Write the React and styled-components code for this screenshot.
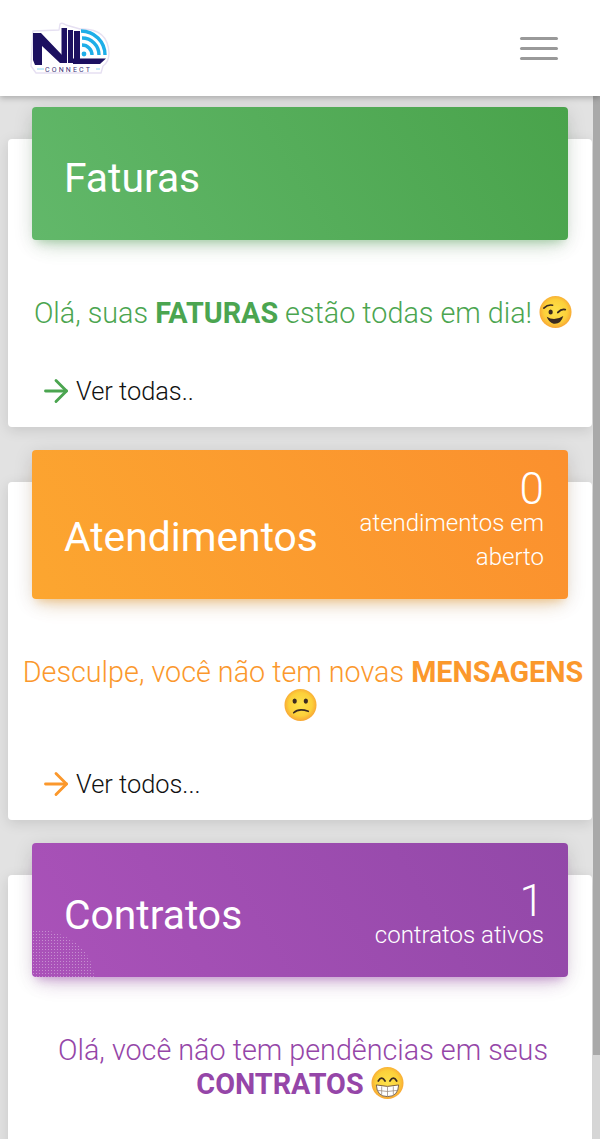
import React from "react";
import styled, { createGlobalStyle } from "styled-components";
import { ArrowRight } from "lucide-react";

const GlobalStyle = createGlobalStyle`
  html, body {
    margin: 0;
    height: 1139px;
    overflow: hidden;
    background: #e2e2e2;
    font-family: Roboto, "Liberation Sans", sans-serif;
  }
`;

const Page = styled.div`
  width: 600px;
  height: 1139px;
  overflow: hidden;
  position: relative;
`;

const TopBar = styled.header`
  position: relative;
  z-index: 3;
  height: 96px;
  background: #fff;
  display: flex;
  align-items: center;
  justify-content: space-between;
  padding: 0 42px 0 28px;
  box-shadow: 0 2px 6px rgba(0, 0, 0, 0.25);
`;

const Burger = styled.div`
  display: flex;
  flex-direction: column;
  gap: 7px;
`;

const BurgerLine = styled.span`
  display: block;
  width: 38px;
  height: 3px;
  border-radius: 2px;
  background: #999;
`;

const Scrollbar = styled.div`
  position: absolute;
  top: 96px;
  right: 0;
  bottom: 0;
  width: 7px;
  background: #d6d6d6;
  z-index: 2;
  &:before {
    content: "";
    display: block;
    height: 959px;
    background: #a9a9a9;
  }
`;

const Content = styled.main`
  padding: 43px 8px 0;
  display: flex;
  flex-direction: column;
  gap: 55px;
`;

const Card = styled.section`
  background: #fff;
  border-radius: 4px;
  box-shadow: 0 3px 14px rgba(0, 0, 0, 0.12);
  padding: 0 0 ${props => props.$bottom || 18}px;
`;

const CardHeader = styled.div`
  position: relative;
  margin: -32px 24px 0;
  height: ${props => props.$height}px;
  box-sizing: border-box;
  border-radius: 4px;
  padding: 0 24px 25px 33px;
  display: flex;
  align-items: flex-end;
  justify-content: space-between;
  color: #fff;
  background: ${props => props.$gradient};
  box-shadow: 0 12px 20px -10px ${props => props.$glow}, 0 4px 20px 0 rgba(0, 0, 0, 0.12),
    0 7px 8px -5px ${props => props.$glow};
`;

/* dotted corner on the purple banner */
const DottedHeader = styled(CardHeader)`
  &:before {
    content: "";
    position: absolute;
    left: 0;
    bottom: 0;
    width: 64px;
    height: 50px;
    border-bottom-left-radius: 4px;
    background-image: radial-gradient(circle, rgba(255, 255, 255, 0.35) 0.7px, transparent 0.9px);
    background-size: 3px 3px;
    clip-path: ellipse(62px 48px at 0 100%);
  }
`;

const Title = styled.h2`
  position: relative;
  margin: 0 0 0 -1px;
  font-size: 40.8px;
  font-weight: 400;
  line-height: 74px;
  white-space: nowrap;
`;

const Stats = styled.div`
  text-align: right;
  width: 200px;
  font-weight: 300;
  font-size: 24px;
  line-height: 34px;
`;

const StatNumber = styled.div`
  font-size: 44px;
`;

const Message = styled.p`
  margin: 56px 0 0;
  padding: 0 5px;
  text-align: center;
  text-indent: 6px;
  font-size: 28.75px;
  font-weight: 300;
  line-height: 34px;
  color: ${props => props.$color};
  b {
    font-weight: 700;
  }
  svg {
    vertical-align: 0;
    margin: -6px 0;
  }
`;

const MoreLink = styled.a`
  display: flex;
  align-items: center;
  gap: 2px;
  margin: 43px 0 0 30px;
  font-size: 25.4px;
  font-weight: 300;
  line-height: 34px;
  color: #111;
`;

const Face = ({ children, id }) => (
  <svg width="33" height="34" viewBox="0 0 34 34">
    <defs>
      <radialGradient id={id} cx="50%" cy="48%" r="52%">
        <stop offset="0%" stopColor="#fde24b" />
        <stop offset="70%" stopColor="#fcd03a" />
        <stop offset="100%" stopColor="#f8a635" />
      </radialGradient>
    </defs>
    <circle cx="17" cy="17" r="16.5" fill={`url(#${id})`} />
    {children}
  </svg>
);

const WinkFace = () => (
  <Face id="wink">
    <ellipse cx="12" cy="17" rx="2.2" ry="2.7" fill="#3a2a20" />
    <path d="M5 13 Q9 9 14 10" fill="none" stroke="#3a2a20" strokeWidth="1.7" strokeLinecap="round" />
    <path d="M19.5 17.5 Q23 13.5 27 14.5" fill="none" stroke="#3a2a20" strokeWidth="2" strokeLinecap="round" />
    <path d="M8 22 Q16 27 25 21 Q22.5 30 15 29 Q10 28 8 22 Z" fill="#3a2a20" />
  </Face>
);

const ConfusedFace = () => (
  <Face id="confused">
    <ellipse cx="11" cy="13" rx="2.2" ry="2.7" fill="#3a2a20" />
    <ellipse cx="22.5" cy="13" rx="2.2" ry="2.7" fill="#3a2a20" />
    <path d="M10 25 Q15 20 25 23.5" fill="none" stroke="#3a2a20" strokeWidth="1.7" strokeLinecap="round" />
  </Face>
);

const GrinFace = () => (
  <Face id="grin">
    <path d="M7.5 15 Q11 9 14.5 15 M19.5 15 Q23 9 26.5 15" fill="none" stroke="#3a2a20" strokeWidth="1.8" strokeLinecap="round" />
    <path d="M5.5 19 Q17 22 28.5 19 Q28 31 17 31 Q6 31 5.5 19 Z" fill="#fff" stroke="#6a5040" strokeWidth="0.9" />
    <path d="M6 24.5 Q17 27 28 24.5 M11 20.5 V29 M17 21 V31 M23 20.5 V29" fill="none" stroke="#9a8a80" strokeWidth="0.8" />
  </Face>
);

const Logo = () => (
  <svg width="84" height="56" viewBox="28 20 84 56">
    <path
      d="M33 31 L59 30 L60 24 Q62 22 66 25 L80 29 Q108 28 109 53 Q109 62 103 66 L101 73 L36 73 L31 66 Z"
      fill="#fff"
      stroke="#e6e0f2"
      strokeWidth="1.4"
      strokeLinejoin="round"
    />
    <path d="M33 33 L41 33 L62 55 L62 63 L60 63 L42 46 L42 65 L35 65 L33 60 Z" fill="#1c1060" />
    <path d="M61.5 28 H67 V63 H61.5 Z M68 30 H73 V63 H68 Z M74 31 H80 V63 H74 Z" fill="#1c1060" />
    <path d="M73 58.5 H106 L100 64 H73 Z" fill="#1c1060" />
    <circle cx="84" cy="54" r="2.4" fill="#1eaee8" />
    <g fill="none" stroke="#1eaee8" strokeWidth="3.4">
      <path d="M82 45 A10 10 0 0 1 92 55" />
      <path d="M82 38 A17 17 0 0 1 99 55" />
      <path d="M81 31 A24 24 0 0 1 105 55" />
    </g>
    <path d="M37 69 H44 M96 69 H100" stroke="#8fd6f2" strokeWidth="1" />
    <text x="45" y="72" fontFamily="Roboto, sans-serif" fontSize="7" letterSpacing="2.15" fill="#3c3578">
      CONNECT
    </text>
  </svg>
);

const App = () => (
  <Page>
    <GlobalStyle />
    <TopBar>
      <Logo />
      <Burger>
        <BurgerLine />
        <BurgerLine />
        <BurgerLine />
      </Burger>
    </TopBar>
    <Scrollbar />
    <Content>
      <Card>
        <CardHeader
          $height={133}
          $gradient="linear-gradient(60deg, #62b86a, #49a34b)"
          $glow="rgba(76, 175, 80, 0.28)"
        >
          <Title>Faturas</Title>
        </CardHeader>
        <Message $color="#4ba550">
          Olá, suas <b>FATURAS</b> estão todas em dia! <WinkFace />
        </Message>
        <MoreLink>
          <ArrowRight size={36} color="#4ba550" strokeWidth={1.9} />
          Ver todas..
        </MoreLink>
      </Card>
      <Card>
        <CardHeader
          $height={149}
          $gradient="linear-gradient(60deg, #fca630, #fb902e)"
          $glow="rgba(255, 152, 0, 0.28)"
        >
          <Title>Atendimentos</Title>
          <Stats>
            <StatNumber>0</StatNumber>
            atendimentos em aberto
          </Stats>
        </CardHeader>
        <Message $color="#fb982c">
          Desculpe, você não tem novas <b>MENSAGENS</b> <ConfusedFace />
        </Message>
        <MoreLink>
          <ArrowRight size={36} color="#fb982c" strokeWidth={1.9} />
          Ver todos...
        </MoreLink>
      </Card>
      <Card $bottom={100}>
        <DottedHeader
          $height={134}
          $gradient="linear-gradient(60deg, #aa52b9, #9248a8)"
          $glow="rgba(156, 39, 176, 0.28)"
        >
          <Title>Contratos</Title>
          <Stats>
            <StatNumber>1</StatNumber>
            contratos ativos
          </Stats>
        </DottedHeader>
        <Message $color="#9546a8">
          Olá, você não tem pendências em seus <b>CONTRATOS</b> <GrinFace />
        </Message>
      </Card>
    </Content>
  </Page>
);

export default App;
